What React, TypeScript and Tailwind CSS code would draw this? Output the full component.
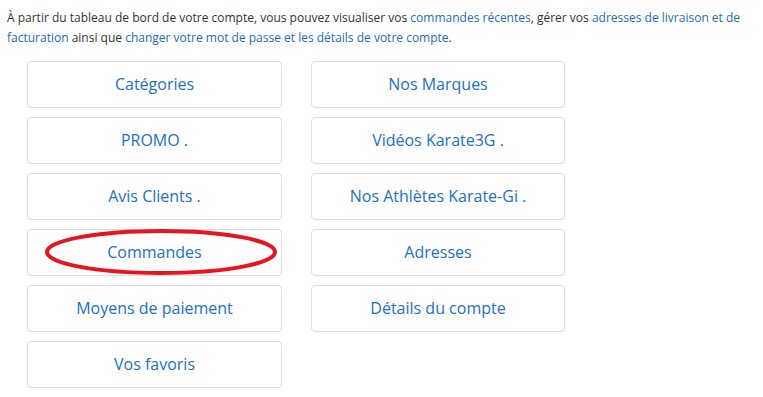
import React from "react";

const links = [
  "Catégories",
  "Nos Marques",
  "PROMO .",
  "Vidéos Karate3G .",
  "Avis Clients .",
  "Nos Athlètes Karate-Gi .",
  "Commandes",
  "Adresses",
  "Moyens de paiement",
  "Détails du compte",
  "Vos favoris",
];

const App: React.FC = () => {
  return (
    <div className="min-h-[397px] w-[763px] bg-white font-['Open_Sans',sans-serif] text-[#333]">
      <p className="px-[7px] pt-[8px] text-[12px] leading-[20px]">
        À partir du tableau de bord de votre compte, vous pouvez visualiser vos{" "}
        <a className="text-[#1e6bbf]">commandes récentes</a>, gérer vos{" "}
        <a className="text-[#1e6bbf]">adresses de livraison et de facturation</a> ainsi que{" "}
        <a className="text-[#1e6bbf]">changer votre mot de passe et les détails de votre compte</a>.
      </p>

      <div className="mt-[13px] grid w-fit grid-cols-[255px_254px] gap-x-[29px] gap-y-[9px] pl-[27px]">
        {links.map((label) => (
          <div key={label} className="relative">
            <a className="flex h-[47px] items-center justify-center rounded-[4px] border border-[#dcdcdc] pb-[2px] text-[16px] text-[#2270c8]">
              {label}
            </a>
            {label === "Commandes" && (
              <svg
                className="pointer-events-none absolute left-[17px] top-[-1px]"
                width="236"
                height="52"
                viewBox="0 0 236 52"
              >
                <ellipse
                  cx="117"
                  cy="24"
                  rx="114"
                  ry="21"
                  fill="none"
                  stroke="#e8141f"
                  strokeWidth="4"
                />
              </svg>
            )}
          </div>
        ))}
      </div>
    </div>
  );
};

export default App;
